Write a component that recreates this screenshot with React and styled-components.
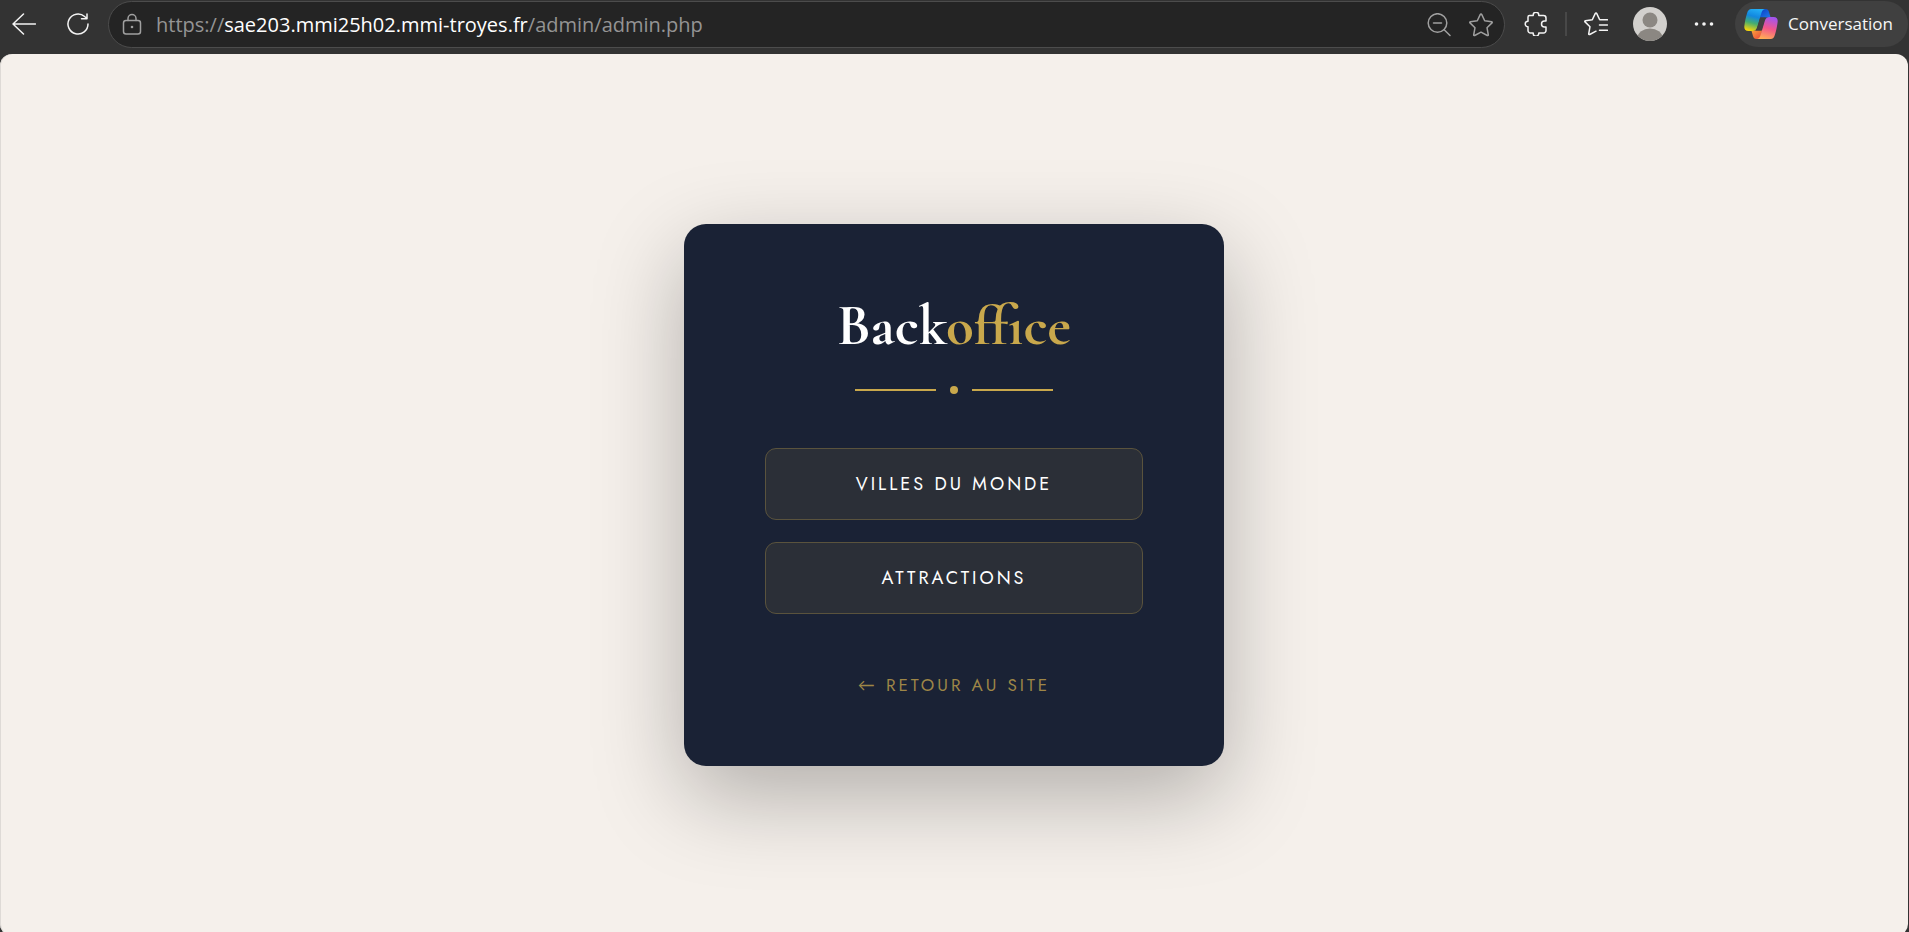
import React from "react";
import styled, { createGlobalStyle } from "styled-components";

const GlobalStyle = createGlobalStyle`
  *, *::before, *::after { box-sizing: border-box; }
  body { margin: 0; background: #333333; }
`;

const Browser = styled.div`
  display: flex;
  flex-direction: column;
  min-height: 100vh;
  overflow: clip;
  background: #333333;
`;

const Toolbar = styled.header`
  display: flex;
  align-items: center;
  height: 54px;
  padding: 0 1px 6px 12px;
  font-family: "Segoe UI", "Open Sans", "Noto Sans", sans-serif;
`;

const Group = styled.div`
  display: flex;
  align-items: center;
  gap: ${(p) => p.$gap}px;
  padding: 0 ${(p) => p.$end}px 0 ${(p) => p.$start || 0}px;
`;

const IconButton = styled.button`
  display: flex;
  width: 24px;
  height: 24px;
  padding: 0;
  border: 0;
  background: none;
  color: ${(p) => (p.$muted ? "#a0a0a0" : "#f4f4f4")};
  cursor: pointer;

  svg { display: block; }
`;

const AddressBar = styled.div`
  display: flex;
  flex: 1;
  align-items: center;
  min-width: 0;
  height: 47px;
  margin-top: 1px;
  padding: 0 11px;
  border: 1px solid #4c4c4c;
  border-radius: 24px;
  background: #242424;
`;

const Url = styled.div`
  flex: 1;
  min-width: 0;
  padding-left: 12px;
  overflow: hidden;
  color: #949494;
  font-size: 20px;
  line-height: 28px;
  white-space: nowrap;
`;

const Host = styled.span`
  color: #ffffff;
`;

const Separator = styled.span`
  width: 2px;
  height: 24px;
  background: #484848;
`;

const Avatar = styled.button`
  width: 34px;
  height: 34px;
  padding: 0;
  border: 0;
  border-radius: 50%;
  background: none;
  cursor: pointer;

  svg { display: block; }
`;

const CopilotButton = styled.button`
  display: flex;
  align-items: center;
  gap: 10px;
  height: 46px;
  padding: 0 15px 0 9px;
  border: 0;
  border-radius: 23px;
  background: #404040;
  color: #f6f6f6;
  font: 17px/24px "Segoe UI", "Open Sans", "Noto Sans", sans-serif;
  cursor: pointer;
`;

const Page = styled.main`
  display: flex;
  flex: 1;
  align-items: center;
  justify-content: center;
  margin: 0 1px -4px 0;
  border-radius: 12px;
  background: #f5f0eb;
  box-shadow: inset 1px 0 #dedad6;
`;

const Card = styled.section`
  display: flex;
  flex-direction: column;
  align-items: center;
  width: 540px;
  max-width: 100%;
  padding: 68px 81px;
  border-radius: 22px;
  background: #1a2235;
  box-shadow: 0 30px 90px rgba(0, 0, 0, 0.28);
`;

const Title = styled.h1`
  margin: 0;
  color: #ffffff;
  font: bold 57px/68px "Cormorant Garamond", "Liberation Serif", serif;
`;

const Gold = styled.span`
  color: #c9a84c;
`;

const Divider = styled.div`
  display: flex;
  align-items: center;
  gap: 14px;
  margin: 26px 0 54px;
`;

const Line = styled.span`
  width: 81px;
  height: 2px;
  background: #c9a84c;
`;

const Dot = styled.span`
  width: 8px;
  height: 8px;
  border-radius: 50%;
  background: #c9a84c;
`;

const Menu = styled.nav`
  display: flex;
  flex-direction: column;
  align-self: stretch;
  gap: 22px;
`;

const MenuLink = styled.a`
  display: flex;
  align-items: center;
  justify-content: center;
  height: 72px;
  border: 1px solid #5a533d;
  border-radius: 11px;
  background: #2b2f37;
  color: #ffffff;
  font: 400 18px/28px Jost, Lato, sans-serif;
  letter-spacing: 3px;
  text-decoration: none;
  text-transform: uppercase;
`;

const BackLink = styled.a`
  margin-top: 58px;
  color: #9e8647;
  font: 400 17px/26px Jost, Lato, sans-serif;
  letter-spacing: 3px;
  text-decoration: none;
  text-transform: uppercase;
`;

const Icon = ({ children }) => (
  <svg
    width="24"
    height="24"
    viewBox="0 0 24 24"
    fill="none"
    stroke="currentColor"
    strokeWidth="1.5"
    strokeLinecap="round"
    strokeLinejoin="round"
    aria-hidden="true"
  >
    {children}
  </svg>
);

const BackIcon = () => (
  <Icon>
    <path d="M11.5 2 1 12l10.500 10M1 12h22.500" />
  </Icon>
);

const ReloadIcon = () => (
  <Icon>
    <path d="M22 12A10 10 0 1 1 18.600 4.500L21 6.500M21 2v4.800h-5.500" />
  </Icon>
);

const LockIcon = () => (
  <Icon>
    <rect x="3.500" y="7.500" width="17" height="13.500" rx="2.500" />
    <path d="M8 7.500V5.500a4 4 0 0 1 8 0v2" />
    <circle cx="12" cy="14" r="1.300" fill="currentColor" stroke="none" />
  </Icon>
);

const ZoomOutIcon = () => (
  <Icon>
    <circle cx="10.500" cy="10" r="9.300" />
    <path d="m17.200 16.700 5.800 5.800M6.500 10h8" />
  </Icon>
);

const StarIcon = () => (
  <Icon>
    <path d="M11.200 1.600a.9.900 0 0 1 1.600 0l2.900 6.200 6.900.9a.7.700 0 0 1 .4 1.200l-5 4.800 1.300 7.100a.7.700 0 0 1-1 .7L12 19.200l-6.300 3.300a.7.700 0 0 1-1-.7L6 14.700 1 9.900a.7.700 0 0 1 .4-1.200l6.900-.9z" />
  </Icon>
);

const PuzzleIcon = () => (
  <Icon>
    <path d="M5.500 3.500h3.700V3a2.800 2.800 0 0 1 5.600 0v.5h4.700a2.500 2.500 0 0 1 2.500 2.500v3h-1.500a3 3 0 0 0 0 6H22v3.500a2.500 2.500 0 0 1-2.500 2.500h-4.700v.4a2.800 2.800 0 0 1-5.600 0V21H6.500A2.500 2.500 0 0 1 4 18.500v-3.700a2.800 2.800 0 0 1 0-5.600V5a1.500 1.500 0 0 1 1.500-1.500z" />
  </Icon>
);

const FavoritesIcon = () => (
  <Icon>
    <path d="m12 19.200-6.300 3.300a.7.700 0 0 1-1-.7L6 14.700 1 9.900a.7.700 0 0 1 .4-1.200l6.900-.9 2.900-6.200a.9.900 0 0 1 1.600 0l2.900 6.200h7.800M15.500 13H23.500M15.500 18.300H23.500" />
  </Icon>
);

const MoreIcon = () => (
  <Icon>
    <g fill="currentColor" stroke="none">
      <circle cx="4.500" cy="12" r="1.800" />
      <circle cx="12" cy="12" r="1.800" />
      <circle cx="19.500" cy="12" r="1.800" />
    </g>
  </Icon>
);

const CopilotLogo = () => (
  <svg width="34" height="30" viewBox="0 0 34 30" aria-hidden="true">
    <defs>
      <linearGradient id="cool" x1="0.600" y1="0" x2="0.350" y2="1">
        <stop offset="0" stopColor="#22aef5" />
        <stop offset="0.350" stopColor="#1287df" />
        <stop offset="0.650" stopColor="#45ad70" />
        <stop offset="1" stopColor="#f4d50c" />
      </linearGradient>
      <linearGradient id="warm" x1="0.600" y1="0" x2="0.350" y2="1">
        <stop offset="0" stopColor="#a354ee" />
        <stop offset="0.500" stopColor="#f2568b" />
        <stop offset="1" stopColor="#ffae55" />
      </linearGradient>
      <linearGradient id="deep" x1="0" y1="0" x2="1" y2="1">
        <stop offset="0" stopColor="#0a3fc4" />
        <stop offset="1" stopColor="#2078e8" />
      </linearGradient>
      <linearGradient id="ember" x1="0" y1="0" x2="1" y2="1">
        <stop offset="0" stopColor="#f9a13a" />
        <stop offset="1" stopColor="#e8453d" />
      </linearGradient>
    </defs>
    <path d="M17 0h4.500c2 0 3 1.300 3.500 3l1.600 5.500H16z" fill="url(#deep)" />
    <path d="M17 30h-4.500c-2 0-3-1.300-3.500-3l-1.600-5.500H18z" fill="url(#ember)" />
    <path d="M7.500 0H21c-1.800.4-3 1.800-3.600 4l-4.200 14c-.7 2.400-2.300 4-4.800 4H4.500C1.500 22 0 20 .3 17.500.8 13 1.800 8.500 3 4.500 3.800 1.500 5 0 7.500 0z" fill="url(#cool)" />
    <path d="M26.500 30H13c1.800-.4 3-1.800 3.600-4l4.200-14c.7-2.400 2.300-4 4.800-4h3.900c3 0 4.500 2 4.200 4.500-.5 4.500-1.500 9-2.700 13-.8 3-2 4.500-4.500 4.500z" fill="url(#warm)" />
    <path d="M16.300 8.500H22c-1 .8-1.500 2-1.800 3.200L17.300 21.500H11.700c.9-.8 1.300-2 1.700-3.200z" fill="#404040" />
  </svg>
);

export default function App() {
  return (
    <Browser>
      <GlobalStyle />
      <Toolbar>
        <Group $gap={30} $end={18}>
          <IconButton aria-label="Retour"><BackIcon /></IconButton>
          <IconButton aria-label="Actualiser"><ReloadIcon /></IconButton>
        </Group>
        <AddressBar>
          <IconButton $muted aria-label="Informations du site"><LockIcon /></IconButton>
          <Url>https://<Host>sae203.mmi25h02.mmi-troyes.fr</Host>/admin/admin.php</Url>
          <Group $gap={18} $end={0}>
            <IconButton $muted aria-label="Zoom arrière"><ZoomOutIcon /></IconButton>
            <IconButton $muted aria-label="Ajouter aux favoris"><StarIcon /></IconButton>
          </Group>
        </AddressBar>
        <Group $gap={17} $start={19} $end={25}>
          <IconButton aria-label="Extensions"><PuzzleIcon /></IconButton>
          <Separator />
          <IconButton aria-label="Favoris"><FavoritesIcon /></IconButton>
        </Group>
        <Group $gap={25} $end={19}>
          <Avatar aria-label="Profil">
            <svg width="34" height="34" viewBox="0 0 34 34" aria-hidden="true">
              <clipPath id="round"><circle cx="17" cy="17" r="17" /></clipPath>
              <g clipPath="url(#round)">
                <rect width="34" height="34" fill="#d2d0cd" />
                <circle cx="17" cy="13" r="7.500" fill="#8b8782" />
                <ellipse cx="17" cy="31" rx="12.500" ry="9.500" fill="#8b8782" />
              </g>
            </svg>
          </Avatar>
          <IconButton aria-label="Paramètres et plus"><MoreIcon /></IconButton>
        </Group>
        <CopilotButton>
          <CopilotLogo />
          Conversation
        </CopilotButton>
      </Toolbar>
      <Page>
        <Card>
          <Title>Back<Gold>office</Gold></Title>
          <Divider>
            <Line />
            <Dot />
            <Line />
          </Divider>
          <Menu>
            <MenuLink href="#villes">Villes du monde</MenuLink>
            <MenuLink href="#attractions">Attractions</MenuLink>
          </Menu>
          <BackLink href="#site">← Retour au site</BackLink>
        </Card>
      </Page>
    </Browser>
  );
}
